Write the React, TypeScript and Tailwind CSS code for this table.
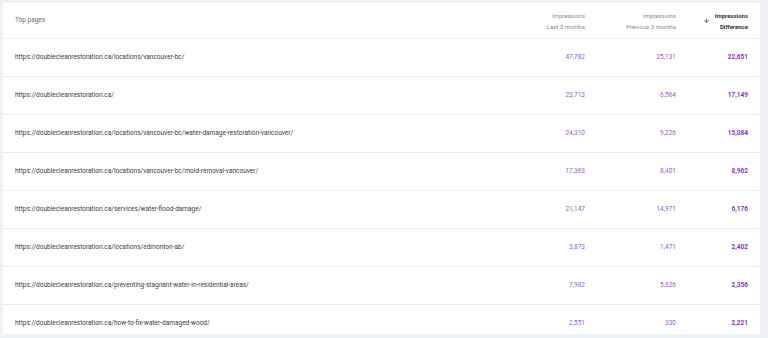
import React from "react";

const rows = [
  ["https://doublecleanrestoration.ca/locations/vancouver-bc/", "47,782", "25,131", "22,651"],
  ["https://doublecleanrestoration.ca/", "23,713", "6,564", "17,149"],
  ["https://doublecleanrestoration.ca/locations/vancouver-bc/water-damage-restoration-vancouver/", "24,310", "9,226", "15,084"],
  ["https://doublecleanrestoration.ca/locations/vancouver-bc/mold-removal-vancouver/", "17,363", "8,401", "8,962"],
  ["https://doublecleanrestoration.ca/services/water-flood-damage/", "21,147", "14,971", "6,176"],
  ["https://doublecleanrestoration.ca/locations/edmonton-ab/", "3,873", "1,471", "2,402"],
  ["https://doublecleanrestoration.ca/preventing-stagnant-water-in-residential-areas/", "7,982", "5,626", "2,356"],
  ["https://doublecleanrestoration.ca/how-to-fix-water-damaged-wood/", "2,551", "330", "2,221"],
];

export default function App() {
  return (
    <div
      className="w-[768px] h-[338px] bg-[#eef1f6] pt-[3px] pl-[3px] pr-[8px] overflow-hidden"
      style={{ fontFamily: "Roboto, 'Liberation Sans', sans-serif" }}
    >
      <div className="bg-white h-[331px] overflow-hidden">
        <div className="grid grid-cols-[1fr_91px_91px_72px] h-[36px] border-b border-[#ececec] items-center">
          <div className="pl-[12px] text-[6.5px] text-[#6b6b6b]">Top pages</div>
          <div className="pr-[12px] text-right text-[6px] leading-[11px] text-[#8a8a8a]">
            <div>Impressions</div>
            <div>Last 3 months</div>
          </div>
          <div className="pr-[12px] text-right text-[6px] leading-[11px] text-[#8a8a8a]">
            <div>Impressions</div>
            <div>Previous 3 months</div>
          </div>
          <div className="pr-[12px] flex justify-end items-center gap-[5px]">
            <svg width="7" height="7" viewBox="0 0 24 24" className="text-[#333]">
              <path d="M20 12l-1.41-1.41L13 16.17V4h-2v12.17l-5.58-5.59L4 12l8 8 8-8z" fill="currentColor" />
            </svg>
            <div className="text-right text-[6px] leading-[11px] font-bold text-[#333]">
              <div>Impressions</div>
              <div>Difference</div>
            </div>
          </div>
        </div>
        {rows.map((r, i) => (
          <div
            key={i}
            className="grid grid-cols-[1fr_91px_91px_72px] h-[38px] border-b border-[#ececec] items-center"
          >
            <div className="pl-[12px] text-[6.5px] text-[#3c3c3c] whitespace-nowrap">{r[0]}</div>
            <div className="pr-[12px] text-right text-[6.5px] text-[#9c5cc6]">{r[1]}</div>
            <div className="pr-[12px] text-right text-[6.5px] text-[#9c5cc6]">{r[2]}</div>
            <div className="pr-[12px] text-right text-[6.5px] font-bold text-[#8a35b8]">{r[3]}</div>
          </div>
        ))}
      </div>
    </div>
  );
}
